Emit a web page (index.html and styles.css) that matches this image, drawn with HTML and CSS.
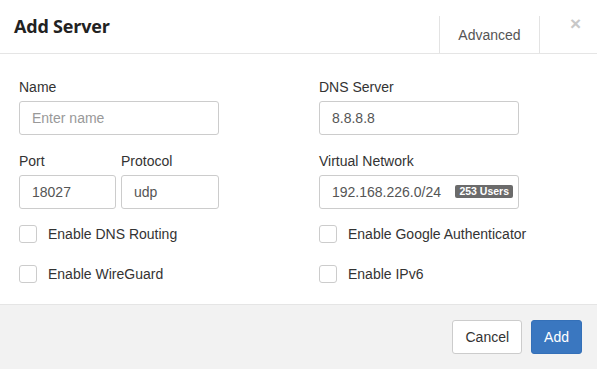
FILE: index.html
```html
<!DOCTYPE html>
<html lang="en">
<head>
  <meta charset="UTF-8" />
  <meta name="viewport" content="width=device-width, initial-scale=1" />
  <title>Add Server</title>
  <link rel="stylesheet" href="styles.css">
</head>
<body>
  <div class="modal">
    <div class="modal-header">
      <h2 class="modal-title">Add Server</h2>
      <div class="header-right">
        <div class="tab">Advanced</div>
        <button class="close" type="button">&times;</button>
      </div>
    </div>

    <div class="modal-body">
      <div class="form-grid">
        <div class="field">
          <label>Name</label>
          <input type="text" placeholder="Enter name">
        </div>
        <div class="field">
          <label>DNS Server</label>
          <input type="text" value="8.8.8.8">
        </div>
        <div class="split">
          <div class="field">
            <label>Port</label>
            <input type="text" value="18027">
          </div>
          <div class="field">
            <label>Protocol</label>
            <input type="text" value="udp">
          </div>
        </div>
        <div class="field">
          <label>Virtual Network</label>
          <div class="input-wrap">
            <input type="text" value="192.168.226.0/24">
            <span class="badge">253 Users</span>
          </div>
        </div>
      </div>
      <div class="check-grid">
        <label class="check"><span class="box"></span>Enable DNS Routing</label>
        <label class="check"><span class="box"></span>Enable Google Authenticator</label>
        <label class="check"><span class="box"></span>Enable WireGuard</label>
        <label class="check"><span class="box"></span>Enable IPv6</label>
      </div>
    </div>

    <div class="modal-footer">
      <button class="btn btn-default" type="button">Cancel</button>
      <button class="btn btn-primary" type="button">Add</button>
    </div>
  </div>
</body>
</html>
```

FILE: styles.css
```css
body {
  margin: 0;
  font-family: "Liberation Sans", Arial, sans-serif;
  font-size: 14px;
  color: #333;
  background-color: #fff;
}
.modal {
  width: 597px;
  height: 369px;
  display: flex;
  flex-direction: column;
}
.modal-header {
  height: 53px;
  border-bottom: 1px solid #e5e5e5;
  display: flex;
  justify-content: space-between;
  align-items: flex-end;
  box-sizing: content-box;
}
.modal-title {
  margin: 0 0 15px 14px;
  font-family: "Open Sans", "Noto Sans", sans-serif;
  font-size: 18px;
  font-weight: 700;
  color: #222;
  line-height: 24px;
  letter-spacing: -0.2px;
}
.header-right {
  display: flex;
  align-items: flex-start;
  height: 53px;
}
.tab {
  margin-top: 16px;
  width: 99px;
  height: 37px;
  border-left: 1px solid #e3e3e3;
  border-right: 1px solid #e3e3e3;
  color: #555;
  text-align: center;
  line-height: 38px;
}
.close {
  width: 57px;
  margin-top: 13px;
  padding: 0 16px 0 0;
  border: none;
  background: none;
  color: #c8c8c8;
  font-family: "Liberation Sans", Arial, sans-serif;
  font-size: 19px;
  font-weight: 700;
  line-height: 22px;
  text-align: right;
  cursor: pointer;
}
.modal-body {
  flex: 1;
  padding: 23px 19px 0 19px;
}
.form-grid {
  display: grid;
  grid-template-columns: 200px 200px;
  column-gap: 100px;
  row-gap: 16px;
}
.field label {
  display: block;
  line-height: 20px;
  margin-bottom: 4px;
  color: #333;
}
.field input {
  width: 100%;
  height: 34px;
  box-sizing: border-box;
  padding: 0 12px;
  border: 1px solid #ccc;
  border-radius: 3px;
  font-family: inherit;
  font-size: 14px;
  color: #555;
  background: #fff;
}
.field input::placeholder {
  color: #999;
}
.split {
  display: grid;
  grid-template-columns: 97px 98px;
  column-gap: 5px;
}
.input-wrap {
  position: relative;
}
.badge {
  position: absolute;
  right: 6px;
  top: 10px;
  background: #6b6b6b;
  color: #fff;
  font-size: 10.5px;
  font-weight: 700;
  line-height: 13px;
  padding: 0 4px;
  border-radius: 2px;
}
.check-grid {
  display: grid;
  grid-template-columns: 200px 200px;
  column-gap: 100px;
  row-gap: 20px;
  margin-top: 15px;
}
.check {
  display: flex;
  align-items: center;
  height: 20px;
  white-space: nowrap;
  color: #333;
}
.box {
  flex: none;
  width: 18px;
  height: 18px;
  border: 1px solid #ccc;
  border-radius: 3px;
  margin-right: 11px;
  box-sizing: border-box;
  background: #fff;
}
.modal-footer {
  height: 65px;
  box-sizing: border-box;
  border-top: 1px solid #e5e5e5;
  background-color: #f2f2f2;
  display: flex;
  justify-content: flex-end;
  align-items: center;
  gap: 9px;
  padding: 0 15px 0 0;
}
.btn {
  height: 34px;
  padding: 0 12px;
  border-radius: 3px;
  font-family: inherit;
  font-size: 14px;
  cursor: pointer;
}
.btn-default {
  background: #fff;
  border: 1px solid #ccc;
  color: #333;
}
.btn-primary {
  background: #3a77c0;
  border: 1px solid #3470b8;
  color: #fff;
}
```
